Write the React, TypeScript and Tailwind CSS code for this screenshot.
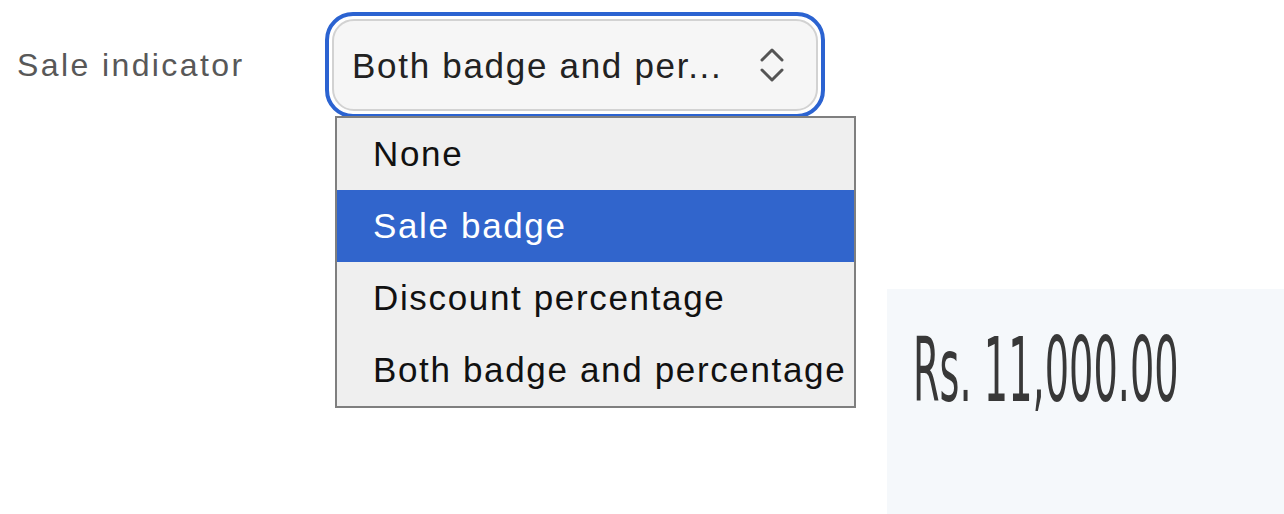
import { useState } from "react";

const options = ["None", "Sale badge", "Discount percentage", "Both badge and percentage"];

function Chevrons() {
	return (
		<svg width="32" height="42" viewBox="0 0 32 42" fill="none" stroke="#555" strokeWidth="3" strokeLinecap="round" strokeLinejoin="round">
			<path d="M6 16 L16 6 L26 16" />
			<path d="M6 26 L16 36 L26 26" />
		</svg>
	);
}

export default function App() {
	const [active] = useState(1);

	return (
		<div className="w-[1284px] h-[514px] bg-white overflow-hidden font-['Liberation_Sans',Arial,sans-serif]">
			<div className="flex items-center pt-[12px] h-[118px]">
				<div className="w-[325px] pl-[17px] text-[32px] tracking-[2.4px] text-[#585858] leading-none">Sale indicator</div>
				<div className="relative">
					<div className="w-[500px] h-[106px] rounded-[28px] border-4 border-[#2b63d1] p-[3px]">
						<div className="h-full rounded-[22px] border-2 border-[#d2d2d2] bg-[#f6f6f6] flex items-center justify-between pl-[18px] pr-[28px]">
							<span className="text-[35px] tracking-[1.7px] text-[#222] leading-none">Both badge and per...</span>
							<Chevrons />
						</div>
					</div>
					<div className="absolute left-[10px] top-[104px] w-[521px] border-2 border-[#7f7f7f] bg-[#efefef]">
						{options.map((o, i) => (
							<div
								key={o}
								className={
									i === active
										? "h-[72px] flex items-center pl-[36px] text-[35px] tracking-[1.65px] bg-[#3165cc] text-white"
										: "h-[72px] flex items-center pl-[36px] text-[35px] tracking-[1.65px] text-[#111]"
								}
							>
								{o}
							</div>
						))}
					</div>
				</div>
			</div>
			<div className="flex justify-end mt-[171px]">
				<div className="w-[397px] h-[225px] bg-[#f5f8fb] pl-[26px] pt-[37px]">
					<div className="origin-left scale-x-[0.43] whitespace-nowrap text-[89px] font-normal leading-none text-[#383838] font-['DejaVu_Sans',sans-serif]">
						Rs. 11,000.00
					</div>
				</div>
			</div>
		</div>
	);
}
